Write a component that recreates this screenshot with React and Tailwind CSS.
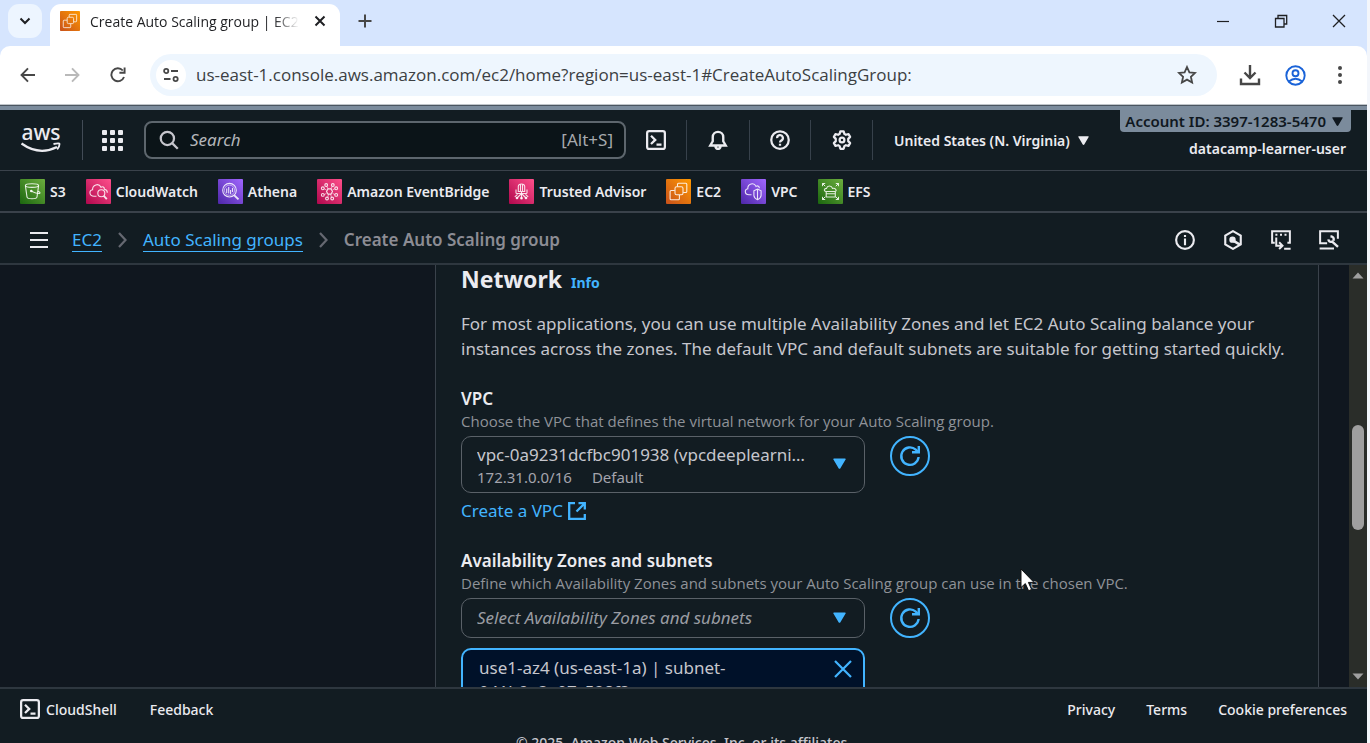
import React from "react";

const S = ({ size = 20, box = 16, sw = 2, className = "", children }) => (
  <svg width={size} height={size} viewBox={`0 0 ${box} ${box}`} fill="none" stroke="currentColor" strokeWidth={sw} className={`shrink-0 ${className}`} aria-hidden="true">
    {children}
  </svg>
);

const Refresh = () => (
  <S size={24} box={24} sw={2.4}>
    <path d="M20.6 13A8.700 8.700 0 1 1 17.800 5.700L20 7.800" />
    <path d="M14 8.300h6.800V2" />
  </S>
);

const CaretDown = ({ className = "" }) => (
  <svg width="13" height="11" viewBox="0 0 13 11" fill="currentColor" className={`shrink-0 ${className}`} aria-hidden="true">
    <path d="M.9.5h11.2q1 0 .5 1L7.400 10.200a1 1 0 0 1-1.800 0L.4 1.500q-.5-1 .5-1z" />
  </svg>
);

const ScrollArrow = ({ className = "" }) => (
  <svg width="12" height="7" viewBox="0 0 12 7" fill="currentColor" className={className} aria-hidden="true">
    <path d="M.5.5h11L6 6.500z" />
  </svg>
);

const CloudShell = () => (
  <S sw={1.8}>
    <rect x=".9" y=".9" width="14.2" height="14.2" rx="1.6" />
    <path d="M4 4.600 7.400 7.900 4 11.200M8.400 11.600h4" />
  </S>
);

const palettes = {
  green: ["#1b660f", "#6cae3e"],
  pink: ["#b0084d", "#ff4f8b"],
  purple: ["#4d27a8", "#a166ff"],
  orange: ["#c8511b", "#ff9900"],
};

const Tile = ({ id, tone, size = 25, children }) => (
  <svg width={size} height={size} viewBox="0 0 25 25" fill="none" stroke="#fff" strokeOpacity=".85" strokeWidth="1.1" className="shrink-0" aria-hidden="true">
    <defs>
      <linearGradient id={id} x1="0" y1="1" x2="1" y2="0">
        <stop offset="0" stopColor={palettes[tone][0]} />
        <stop offset="1" stopColor={palettes[tone][1]} />
      </linearGradient>
    </defs>
    <rect width="25" height="25" rx="1" fill={`url(#${id})`} stroke="none" />
    {children}
  </svg>
);

const Ec2Drawing = () => (
  <>
    <rect x="9" y="7.800" width="8" height="8" rx="1.600" />
    <path d="M11.500 7.500V5.200q0-1 1-1h7.300q1 0 1 1v7.300q0 1-1 1h-2.500M8.700 11.500H5.100q-1 0-1 1v7.300q0 1 1 1h7.300q1 0 1-1v-3.700" />
  </>
);

const services = [
  ["S3", "green", <>
    <ellipse cx="12" cy="6.600" rx="6.600" ry="1.800" />
    <path d="M5.400 6.600 7 18q.3 1.800 5 1.800t5-1.800l1.600-11.400" />
    <path d="M11.500 12.200q6 2.800 8.200 2.200 1.200-1.100-2-2.200" />
    <circle cx="11.300" cy="12" r=".8" fill="#fff" />
  </>],
  ["CloudWatch", "pink", <>
    <path d="M10.500 17.200H8c-5 0-5.200-5.800-1.400-6.400C6.300 6 12.600 3.400 15 8.300c1.600-1.300 3.500-.2 3.400 2 2 .3 3 1.700 2.900 3.400" />
    <circle cx="15.300" cy="14.200" r="3.500" />
    <path d="m17.800 16.800 3 3.300" strokeWidth="1.900" />
  </>],
  ["Athena", "purple", <>
    <circle cx="11.500" cy="11.200" r="6.800" />
    <circle cx="11.500" cy="11.200" r="5.100" strokeWidth=".6" />
    <path d="M8.700 9.500v4.500M10.700 8v6.500M12.600 11v4M14.500 9v4" />
    <path d="m16.300 16.400 4.200 4" strokeWidth="2" />
  </>],
  ["Amazon EventBridge", "pink", <>
    <path d="m11 9.900h3l1.500 2.600-1.500 2.600h-3l-1.500-2.600z" />
    <path d="m9.500 11-2.300-1.300M15.500 11l2.300-1.300M9.500 14.300l-2.300 1.300M15.500 14.300l2.300 1.300M11 9.900 9.800 7.300M14 9.900l1.200-2.600M11.500 15.200l-.7 3M13.700 15.200l.7 3" strokeWidth=".7" />
    <circle cx="9.200" cy="6" r="1.400" /><circle cx="15.800" cy="6" r="1.400" />
    <circle cx="5.800" cy="9.300" r="1.400" /><circle cx="19.200" cy="9.300" r="1.400" />
    <circle cx="5.800" cy="15.900" r="1.400" /><circle cx="19.200" cy="15.900" r="1.400" />
    <circle cx="10" cy="19.500" r="1.400" /><circle cx="15.200" cy="19.500" r="1.400" />
  </>],
  ["Trusted Advisor", "pink", <>
    <path d="M9.300 12.500V7.200Q9.500 5 12.500 5t3.200 2.200v5.300zM12.500 12.500v6M11.500 5.500v7M13.500 5.500v7" />
    <path d="M7 10.500v3.200q0 .8.800.8h9.400q.8 0 .8-.8v-3.200M12.500 14.500 8.500 18.500M12.500 14.500l4 4" />
    <path d="m8.500 15.300-2.700 2.500M16.500 15.300l2.700 2.500" />
    <circle cx="8" cy="19" r=".8" fill="#fff" /><circle cx="12.500" cy="19.200" r=".8" fill="#fff" /><circle cx="17" cy="19" r=".8" fill="#fff" />
  </>],
  ["EC2", "orange", <Ec2Drawing />],
  ["VPC", "purple", <>
    <path d="M10.500 15.700H8c-4.800-.2-4.600-5.400-1.200-6C6.600 4.800 13 2.900 15 7.400c1.700-1.200 3.500 0 3.300 1.800" />
    <path d="M12.900 11.800 16.500 10l3.600 1.800v4.700q-.3 2.700-3.600 4.200-3.300-1.500-3.600-4.200zM16.500 10.500V20" />
  </>],
  ["EFS", "green", <>
    <path d="M8.200 18V12.500h9.100V18zM8 12.500c-2.500-.4-2-3 .5-3.100.8-3 5-3.200 6 0 3.200-.7 4.700 2.500 2.800 3.100M8.200 14.800h9.100" />
    <path d="m4.500 4.500 2.700 2.700M4.500 7.200V4.500h2.700M20.500 4.500l-2.700 2.700M17.800 4.500h2.700v2.700M4.500 20.500l2.700-2.700M4.500 17.800v2.700h2.700M20.500 20.500l-2.700-2.700M17.800 20.500h2.700v-2.700" strokeWidth="1" />
  </>],
];

function BrowserChrome() {
  return (
    <div className="shrink-0 bg-[#d6e5fe] font-['Open_Sans',sans-serif] text-[#1f2023]">
      <div className="flex h-[46px] items-stretch">
        <button aria-label="Search tabs" className="mt-1 ml-2 flex size-[34px] items-center justify-center rounded-[11px] bg-[#edf5ff]">
          <S size={12} box={12}><path d="M1.500 3.500 6 8l4.500-4.500" /></S>
        </button>
        <div className="mt-1 ml-2 flex w-[290px] items-center rounded-t-[11px] bg-white pr-[10px] pb-2 pl-[10px]">
          <Tile id="tab-ec2" tone="orange" size={20}><Ec2Drawing /></Tile>
          <span className="ml-[10px] w-[209px] overflow-hidden text-[14px] whitespace-nowrap [mask-image:linear-gradient(to_right,#000_88%,transparent)]">Create Auto Scaling group | EC2</span>
          <button aria-label="Close tab" className="ml-auto p-1"><S size={12} box={12}><path d="m1.500 1.500 9 9M10.500 1.500l-9 9" /></S></button>
        </div>
        <button aria-label="New tab" className="ml-4 flex w-[18px] items-center justify-center pb-1 text-[#474747]"><S size={14} box={14}><path d="M7 .5v13M.5 7h13" /></S></button>
        <div className="ml-auto flex items-center gap-[44px] pr-[21px] pb-1">
          <button aria-label="Minimize"><S size={14} box={14} sw={1.200}><path d="M1 7.500h12" /></S></button>
          <button aria-label="Restore"><S size={14} box={14} sw={1.300}><path d="M1.500 4.500h8.500v8.500H1.500zM4 4.500V1.500h8.700V10H10" /></S></button>
          <button aria-label="Close"><S size={14} box={14} sw={1.300}><path d="m1 1 12 12M13 1 1 13" /></S></button>
        </div>
      </div>
      <div className="flex h-[58px] items-center rounded-t-[10px] bg-white px-5 text-[#474747]">
        <button aria-label="Back"><S size={16} sw={1.900}><path d="M15 8H1.500M8 1.300 1.500 8 8 14.700" /></S></button>
        <button aria-label="Forward" className="ml-7 text-[#b9b9b9]"><S size={16} sw={1.900}><path d="M1 8h13.500M8 1.300 14.500 8 8 14.700" /></S></button>
        <button aria-label="Reload" className="ml-7 p-[2px]"><S size={16} sw={1.900}><path d="M14 10A6.500 6.500 0 1 1 12.800 3.500M14.600.5v5.200H9.400" /></S></button>
        <div className="ml-[22px] flex h-[42px] flex-1 items-center rounded-full bg-[#eef6fe] px-[6px]">
          <button aria-label="View site information" className="flex size-[30px] items-center justify-center rounded-full bg-white">
            <S size={16} sw={1.800}><circle cx="3.200" cy="4" r="2.100" /><path d="M8 4h7M1 12h6.500" /><circle cx="12.600" cy="12" r="2.100" /></S>
          </button>
          <input aria-label="Address" readOnly value="us-east-1.console.aws.amazon.com/ec2/home?region=us-east-1#CreateAutoScalingGroup:" className="ml-[10px] min-w-0 flex-1 bg-transparent text-[17px] text-[#3c3f43] outline-none" />
          <button aria-label="Bookmark" className="mr-[14px]"><S size={20} box={20} sw={1.800}><path d="m10 2 2.400 5.300 5.700.6-4.200 3.900 1.200 5.700L10 14.600l-5.100 2.900 1.200-5.700L1.900 7.900l5.700-.6z" /></S></button>
        </div>
        <button aria-label="Downloads" className="ml-[22px]"><S size={22} box={22} sw={2.400}><path d="M11 1v13M5.500 8.500 11 14l5.500-5.500M2 14.500V20h18v-5.500" /></S></button>
        <button aria-label="Profile" className="ml-6 text-[#1a63d8]"><S size={21} box={21} sw={1.900}><circle cx="10.500" cy="10.500" r="9.200" /><circle cx="10.500" cy="8.300" r="3" /><path d="M3.800 16.500q6.700-5.500 13.400 0" /></S></button>
        <button aria-label="Menu" className="ml-[27px] px-1">
          <svg width="6" height="20" viewBox="0 0 6 20" fill="currentColor" aria-hidden="true"><circle cx="3" cy="3" r="2" /><circle cx="3" cy="10" r="2" /><circle cx="3" cy="17" r="2" /></svg>
        </button>
      </div>
    </div>
  );
}

function ConsoleHeader() {
  return (
    <header className="shrink-0 border-t-4 border-[#7b8b9c] bg-[#121c22] text-[#ebebf0]">
      <div className="flex h-[61px] border-b border-[#3a424b]">
        <a href="#home" aria-label="AWS home" className="mt-3 ml-5 flex w-[42px] flex-col items-center">
          <span className="text-[21px] leading-5 font-medium">aws</span>
          <svg width="42" height="12" viewBox="0 0 42 12" fill="none" stroke="currentColor" aria-hidden="true">
            <path d="M1.500 1.500Q19 14 37 5" strokeWidth="2.200" />
            <path d="M33.500 2q6.500-1.300 6 .2 0 2.500-2.300 5.200" strokeWidth="1.800" />
          </svg>
        </a>
        <div className="my-[10px] ml-5 w-px bg-[#424b56]" />
        <button aria-label="Services" className="ml-[19px]">
          <svg width="21" height="21" viewBox="0 0 21 21" fill="currentColor" aria-hidden="true">
            {[0, 8, 16].map((y) => [0, 8, 16].map((x) => <rect key={`${x}-${y}`} x={x} y={y} width="5" height="5" rx="1" />))}
          </svg>
        </button>
        <div className="my-[11px] ml-[21px] flex w-[482px] items-center rounded-lg border-2 border-[#5d666d] bg-[#0b1418] px-[13px] text-[#a6a9ad]">
          <S size={20} sw={1.800} className="text-[#c6c6cd]"><circle cx="6.700" cy="6.700" r="5.300" /><path d="m10.500 10.500 4.500 4.500" /></S>
          <input aria-label="Search" placeholder="Search" className="ml-[11px] min-w-0 flex-1 bg-transparent text-[17px] outline-none placeholder:text-[#b4b6ba] placeholder:italic" />
          <span className="-mr-[2px] text-[17px]">[Alt+S]</span>
        </div>
        <button aria-label="CloudShell" className="ml-5"><CloudShell /></button>
        <div className="my-[10px] ml-5 w-px bg-[#37414b]" />
        <button aria-label="Notifications" className="ml-[21px]"><S sw={1.900}><path d="M3.800 9V5.700a4.200 4.200 0 0 1 8.400 0V9l2 3.400H1.800zM5.900 12.600q.3 2.500 2.100 2.500t2.100-2.500" /></S></button>
        <div className="my-[10px] ml-[21px] w-px bg-[#37414b]" />
        <button aria-label="Help" className="ml-5"><S sw={1.800}><circle cx="8" cy="8" r="7" /><path d="M5.700 6.500a2.300 2.300 0 1 1 3.300 2q-1 .5-1 1.500M8 11v1.500" /></S></button>
        <div className="my-[10px] ml-5 w-px bg-[#37414b]" />
        <button aria-label="Settings" className="ml-[21px]"><S sw={1.800}><circle cx="8" cy="8" r="1.900" /><path d="M6.700 1h2.600l.6 2.100 1.200.7 2.100-.5 1.300 2.200-1.500 1.600v1.800l1.500 1.600-1.300 2.200-2.100-.5-1.200.7-.6 2.100H6.700l-.6-2.100-1.200-.7-2.100.5-1.300-2.200L3 8.900V7.100L1.500 5.500l1.300-2.200 2.100.5 1.200-.7z" strokeLinejoin="round" /></S></button>
        <div className="my-[10px] ml-5 w-px bg-[#37414b]" />
        <button className="ml-[21px] flex items-center gap-2 text-[14px] font-semibold whitespace-nowrap">
          United States (N. Virginia)
          <CaretDown className="w-[11px]" />
        </button>
        <div className="mr-4 ml-auto flex flex-col items-end">
          <button className="flex h-[22px] items-center gap-[6px] rounded-b bg-[#7b8b9c] pr-2 pl-[5px] text-[15px] font-semibold whitespace-nowrap text-[#10181f]">
            Account ID: 3397-1283-5470
            <CaretDown className="w-[11px]" />
          </button>
          <span className="mt-[7px] mr-[5px] text-[14px] leading-5 font-semibold">datacamp-learner-user</span>
        </div>
      </div>
      <nav aria-label="Favorites" className="flex h-[42px] items-center gap-5 border-b-2 border-[#3a424b] pl-5">
        {services.map(([name, tone, art]) => (
          <a key={name} href={`#${name}`} className="flex items-center gap-[5px] text-[14px] font-semibold whitespace-nowrap">
            <Tile id={`svc-${name.replace(" ", "-")}`} tone={tone}>{art}</Tile>
            {name}
          </a>
        ))}
      </nav>
      <div className="flex h-[52px] items-center border-b-2 border-[#2e373f] pt-[3px] pr-7 pl-[30px]">
        <button aria-label="Open navigation"><S size={18} box={18} sw={2.200}><path d="M0 2h18M0 9h18M0 16h18" /></S></button>
        <nav aria-label="Breadcrumb" className="ml-6 flex items-center gap-4 text-[17px]">
          <a href="#ec2" className="border-b border-[#42b4ff] leading-[23px] text-[#42b4ff]">EC2</a>
          <svg width="9" height="16" viewBox="0 0 9 16" fill="none" stroke="#656871" strokeWidth="2.200" aria-hidden="true"><path d="m1 1 6.500 7L1 15" /></svg>
          <a href="#groups" className="border-b border-[#42b4ff] leading-[23px] text-[#42b4ff]">Auto Scaling groups</a>
          <svg width="9" height="16" viewBox="0 0 9 16" fill="none" stroke="#656871" strokeWidth="2.200" aria-hidden="true"><path d="m1 1 6.500 7L1 15" /></svg>
          <span className="font-semibold text-[#8c8c94]">Create Auto Scaling group</span>
        </nav>
        <div className="ml-auto flex items-center gap-7">
          <button aria-label="Info"><S sw={1.700}><circle cx="8" cy="8" r="7.100" /><path d="M8 4v1.600M8 6.800v5.400" /></S></button>
          <button aria-label="Amazon Q"><S sw={1.700}><path d="M8 .9 14.200 4.400v7.200L8 15.100 1.800 11.600V4.400z" /><circle cx="7.600" cy="7.700" r="1.700" fill="currentColor" /><path d="m8.500 8.700 5 3" strokeWidth="2" /></S></button>
          <button aria-label="Actions"><S sw={1.600}><path d="M3 10.200H.9V.9h14.200v9.300h-2" /><path d="M3.500 3.700h1.600M7.200 3.700h1.600M10.800 3.700h1.600M4.200 6v6.500h5M6.500 9.800l2.700 2.700-2.700 2.700M10.500 15h5.200" /></S></button>
          <button aria-label="Tools"><S sw={1.600}><path d="M6.500 10.500H.9V.9h14.200v6M.5 14.800h11.500" /><path d="M7.500 7.500q.3 2.500 3 1.800l4.700 4.200M9.200 5q3.300.5 2.400 3.600" strokeWidth="1.900" /></S></button>
        </div>
      </div>
    </header>
  );
}

const RefreshButton = ({ label }) => (
  <button aria-label={label} className="flex size-10 shrink-0 items-center justify-center rounded-full border-2 border-[#42b4ff] text-[#42b4ff]">
    <Refresh />
  </button>
);

function NetworkPanel() {
  return (
    <section className="min-w-0 flex-1 border-x border-[#3a424b] bg-[#121c22] px-[25px] text-[#c6c6cd]">
      <div className="flex h-7 items-baseline gap-[9px]">
        <h2 className="text-[23px] leading-7 font-bold text-[#ebebf0]">Network</h2>
        <a href="#info" className="text-[14px] font-bold text-[#42b4ff]">Info</a>
      </div>
      <p className="mt-[18px] text-[17px] leading-[25px]">
        For most applications, you can use multiple Availability Zones and let EC2 Auto Scaling balance your instances across the zones. The default VPC and default subnets are suitable for getting started quickly.
      </p>
      <div className="mt-[25px]">
        <label htmlFor="vpc" className="block text-[17px] leading-[25px] font-semibold text-[#ebebf0]">VPC</label>
        <p className="font-['Open_Sans',sans-serif] text-[15px] leading-5 text-[#8f9298]">Choose the VPC that defines the virtual network for your Auto Scaling group.</p>
        <div className="mt-[5px] flex gap-[25px]">
          <button id="vpc" aria-haspopup="listbox" className="flex w-[404px] items-center rounded-[10px] border border-[#5a6168] pt-1 pr-[18px] pb-[6px] pl-[15px] text-left">
            <span className="min-w-0 flex-1">
              <span className="block truncate text-[17px] leading-[27px]">vpc-0a9231dcfbc901938 (vpcdeeplearning)</span>
              <span className="flex gap-5 text-[15px] leading-[18px] text-[#a4a4ad]"><span>172.31.0.0/16</span><span>Default</span></span>
            </span>
            <CaretDown className="ml-5 text-[#42b4ff]" />
          </button>
          <RefreshButton label="Refresh VPCs" />
        </div>
        <a href="#create-vpc" className="mt-[5px] flex items-center gap-[5px] text-[17px] leading-[25px] text-[#42b4ff]">
          Create a VPC
          <S size={18} box={18} sw={2.300}><path d="M7 1.200H1.200v15.600h15.600V12M10.500 1.200h6.300v6.300M16.800 1.200 8.500 9.500" /></S>
        </a>
      </div>
      <div className="mt-[25px]">
        <label htmlFor="zones" className="block text-[17px] leading-[25px] font-semibold text-[#ebebf0]">Availability Zones and subnets</label>
        <p className="font-['Open_Sans',sans-serif] text-[15px] leading-5 text-[#8f9298]">Define which Availability Zones and subnets your Auto Scaling group can use in the chosen VPC.</p>
        <div className="mt-[5px] flex gap-[25px]">
          <div className="relative w-[404px]">
            <select id="zones" className="h-10 w-full appearance-none rounded-[10px] border border-[#5a6168] bg-transparent pr-10 pl-[15px] text-[17px] text-[#9a9ca3] italic">
              <option>Select Availability Zones and subnets</option>
            </select>
            <CaretDown className="pointer-events-none absolute top-[14px] right-[19px] text-[#42b4ff]" />
          </div>
          <RefreshButton label="Refresh subnets" />
        </div>
        <div className="mt-[10px] flex w-[404px] items-start rounded-[10px] border-2 border-[#42b4ff] bg-[#001129] px-4 py-[6px] text-[17px] leading-6">
          <span className="flex-1">use1-az4 (us-east-1a) | subnet-<br />041b9e3a07c528f3e</span>
          <button aria-label="Remove subnet" className="-mr-[5px] pt-1 text-[#42b4ff]"><S size={18} box={18} sw={2.200}><path d="m1 1 16 16M17 1 1 17" /></S></button>
        </div>
      </div>
    </section>
  );
}

export default function App() {
  return (
    <div className="relative flex h-screen flex-col overflow-hidden border-r-3 border-[#f3f6fb] bg-[#10171f] font-['Noto_Sans','Open_Sans',sans-serif]">
      <BrowserChrome />
      <div className="h-[2px] shrink-0 border-t border-[#c0c5ca] bg-[#4a5560]" />
      <ConsoleHeader />
      <main className="flex min-h-0 flex-1 overflow-hidden">
        <div className="w-[435px] shrink-0" />
        <NetworkPanel />
        <div className="w-[30px] shrink-0" />
        <div className="flex w-[18px] shrink-0 flex-col items-center bg-[#2a2d29] py-[7px] text-[#9f9f9f]" role="presentation">
          <ScrollArrow className="rotate-180" />
          <div className="mt-[146px] mb-auto h-[105px] w-3 rounded-full bg-[#9f9f9f]" />
          <ScrollArrow />
        </div>
      </main>
      <footer className="h-[56px] shrink-0 overflow-hidden border-t-2 border-[#2e373f] bg-[#121c22] text-[14px] font-medium text-[#ebebf0]">
        <div className="flex h-10 items-center px-5">
          <button className="flex items-center gap-[6px]"><CloudShell />CloudShell</button>
          <a href="#feedback" className="ml-[33px]">Feedback</a>
          <div className="ml-auto flex gap-[31px]">
            <a href="#privacy">Privacy</a>
            <a href="#terms">Terms</a>
            <a href="#cookies">Cookie preferences</a>
          </div>
        </div>
        <p className="mt-1 text-center leading-5 text-[#c6c6cd]">© 2025, Amazon Web Services, Inc. or its affiliates.</p>
      </footer>
      <svg width="16" height="25" viewBox="0 0 16 25" className="absolute top-[568px] left-[1020px]" aria-hidden="true">
        <path d="M1 1v18.500l4.300-3.900 3.300 7.200 3-1.400-3.200-7H14z" fill="#fff" stroke="#111" strokeWidth="1" />
      </svg>
    </div>
  );
}
